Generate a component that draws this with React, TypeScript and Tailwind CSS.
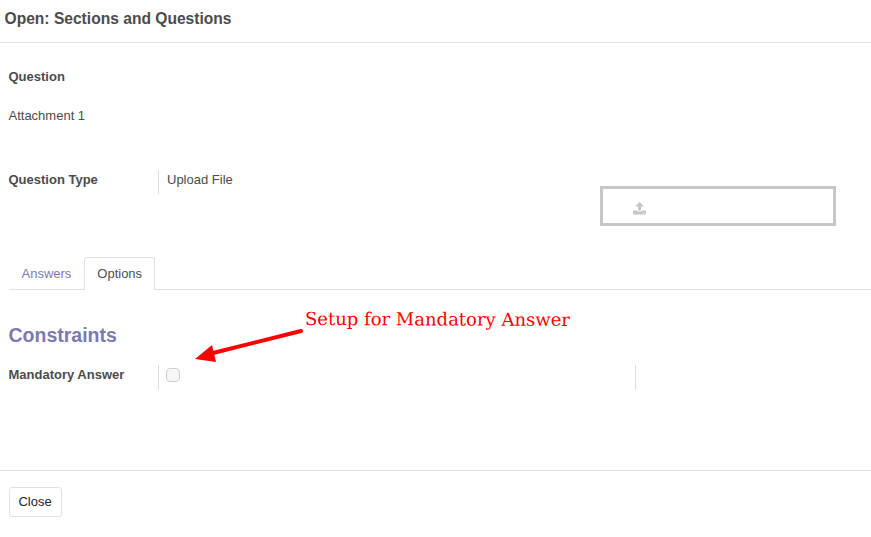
function UploadIcon() {
  return (
    <svg className="h-[12.5px] w-[13px] text-[#c6c6c6]" viewBox="0 0 1664 1600" fill="currentColor">
      <path d="M1280 1408q0-26-19-45t-45-19-45 19-19 45 19 45 45 19 45-19 19-45zm256 0q0-26-19-45t-45-19-45 19-19 45 19 45 45 19 45-19 19-45zm128-224v320q0 40-28 68t-68 28h-1472q-40 0-68-28t-28-68v-320q0-40 28-68t68-28h427q21 56 70.500 92t110.500 36h256q61 0 110.500-36t70.500-92h427q40 0 68 28t28 68zm-325-648q-17 40-59 40h-256v448q0 26-19 45t-45 19h-256q-26 0-45-19t-19-45v-448h-256q-42 0-59-40-17-39 14-69l448-448q18-19 45-19t45 19l448 448q31 30 14 69z" />
    </svg>
  );
}

export default function App() {
  return (
    <div className="relative flex h-[537px] w-[871px] flex-col overflow-hidden bg-white font-['Liberation_Sans',Arial,sans-serif] text-[13px] leading-5 text-[#4c4c4c]">
      <header className="h-[43px] shrink-0 border-b border-[#dee2e6] pt-[7px] pl-[4.5px] text-[#4c4c4c]">
        <h4 className="text-[15.6px] leading-6 font-bold">Open: Sections and Questions</h4>
      </header>

      <main className="flex h-[427px] shrink-0 flex-col pt-6 pl-[8.5px]">
        <div className="font-bold">Question</div>
        <div className="mt-[19px]">Attachment 1</div>

        <div className="mt-[44px] flex h-[56px] justify-between pr-[35px]">
          <div className="flex h-6">
            <div className="w-[149.5px] font-bold">Question Type</div>
            <div className="border-l border-[#dddddd] pl-2">Upload File</div>
          </div>
          <div className="mt-4 flex h-10 w-[236px] border-[3px] border-[#c6c6c6] pt-[13px] pl-[30px]">
            <UploadIcon />
          </div>
        </div>

        <div className="mt-[31px] ml-[0.5px] flex h-[33px] shrink-0 border-b border-[#dee2e6]">
          <div className="w-[75px] pt-[7px] pl-[12.5px] text-[#7c7bad]">Answers</div>
          <div className="h-[33px] w-[71px] rounded-t-[3px] border border-b-0 border-[#dee2e6] bg-white pt-[6px] pl-[12.3px] text-[#495057]">
            Options
          </div>
        </div>

        <h2 className="mt-[33px] text-[19.5px] leading-6 font-bold text-[#7c7bad]">Constraints</h2>
        <div className="mt-[18px] flex h-[25px]">
          <div className="w-[149.5px] font-bold">Mandatory Answer</div>
          <div className="w-[477px] border-l border-[#dddddd] pt-[3px] pl-[7px]">
            <div className="h-[14px] w-[14px] rounded-[4px] border border-[#cecece] bg-[#f6f6f6]" />
          </div>
          <div className="w-px bg-[#dddddd]" />
        </div>
      </main>

      <footer className="h-[67px] shrink-0 border-t border-[#dee2e6] pt-4 pl-[9px]">
        <button className="block h-[30px] w-[53px] rounded-[3px] border border-[#dee2e6] bg-white pr-px text-[#212529]">
          Close
        </button>
      </footer>

      <svg className="absolute top-[320px] left-[190px]" width="120" height="50" viewBox="190 320 120 50">
        <path d="M301 331 L213 353" stroke="#ff0000" strokeWidth="4" strokeLinecap="round" />
        <path d="M195 359 L212 345 L216 362 Z" fill="#ff0000" />
      </svg>
      <div className="absolute top-[307px] left-[305px] origin-left rotate-[0.2deg] font-['DejaVu_Serif',serif] text-[18px] leading-6 whitespace-nowrap text-[#ff0000]">
        Setup for Mandatory Answer
      </div>
    </div>
  );
}
